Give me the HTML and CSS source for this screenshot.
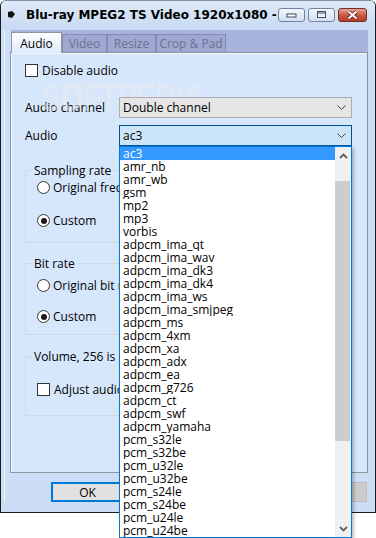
FILE: index.html
```html
<!DOCTYPE html>
<html lang="en">
<head>
    <meta charset="UTF-8">
    <title>Blu-ray MPEG2 TS Video 1920x1080</title>
    <link rel="stylesheet" href="styles.css">
</head>
<body>
    <div class="window">
        <div class="titlebar">
            <svg class="app-icon" width="7" height="7" viewBox="0 0 7 7"><polygon points="0,1 4,0 7,3 4,7 0,6" fill="#111"/></svg>
            <div class="title">Blu-ray MPEG2 TS Video 1920x1080 - (H.264, AC3)</div>
            <div class="caption-buttons">
                <span class="cap-btn">
                    <svg width="11" height="6" viewBox="0 0 11 6"><rect x="1" y="2" width="9" height="3" fill="#fff" stroke="#3b4a63"/></svg>
                </span>
                <span class="cap-btn">
                    <svg width="11" height="9" viewBox="0 0 11 9"><rect x="1.5" y="1.5" width="8" height="6" fill="none" stroke="#3b4a63"/><rect x="2.5" y="2.5" width="6" height="4" fill="none" stroke="#fff"/><line x1="2" y1="3" x2="9" y2="3" stroke="#3b4a63" stroke-width="1"/></svg>
                </span>
                <span class="cap-btn close">
                    <svg width="13" height="10" viewBox="0 0 13 10"><path d="M2.5 1.5 L10.5 8.5 M10.5 1.5 L2.5 8.5" stroke="#5a1e16" stroke-width="3.6"/><path d="M2.5 1.5 L10.5 8.5 M10.5 1.5 L2.5 8.5" stroke="#fff" stroke-width="2"/></svg>
                </span>
            </div>
        </div>

        <div class="client">
            <div class="tabs">
                <div class="tab active tab-audio">Audio</div>
                <div class="tab tab-video">Video</div>
                <div class="tab tab-resize">Resize</div>
                <div class="tab tab-crop">Crop &amp; Pad</div>
            </div>

            <div class="panel">
                <div class="watermark">SOFTPEDIA<span class="reg">®</span></div>

                <div class="check-row">
                    <span class="checkbox"></span>Disable audio
                </div>

                <div class="field-row">
                    <span class="field-label">Audio channel</span>
                    <div class="select">
                        Double channel
                        <svg class="chevron" width="9" height="5" viewBox="0 0 9 5"><path d="M0.5 0.5 L4.5 4.5 L8.5 0.5" fill="none" stroke="#444" stroke-width="1"/></svg>
                    </div>
                </div>

                <div class="field-row field-row-audio">
                    <span class="field-label">Audio</span>
                    <div class="select open">
                        ac3
                        <svg class="chevron" width="9" height="5" viewBox="0 0 9 5"><path d="M0.5 0.5 L4.5 4.5 L8.5 0.5" fill="none" stroke="#444" stroke-width="1"/></svg>

                        <div class="dropdown">
                            <div class="options">
                                <div class="option selected">ac3</div>
                                <div class="option">amr_nb</div>
                                <div class="option">amr_wb</div>
                                <div class="option">gsm</div>
                                <div class="option">mp2</div>
                                <div class="option">mp3</div>
                                <div class="option">vorbis</div>
                                <div class="option">adpcm_ima_qt</div>
                                <div class="option">adpcm_ima_wav</div>
                                <div class="option">adpcm_ima_dk3</div>
                                <div class="option">adpcm_ima_dk4</div>
                                <div class="option">adpcm_ima_ws</div>
                                <div class="option">adpcm_ima_smjpeg</div>
                                <div class="option">adpcm_ms</div>
                                <div class="option">adpcm_4xm</div>
                                <div class="option">adpcm_xa</div>
                                <div class="option">adpcm_adx</div>
                                <div class="option">adpcm_ea</div>
                                <div class="option">adpcm_g726</div>
                                <div class="option">adpcm_ct</div>
                                <div class="option">adpcm_swf</div>
                                <div class="option">adpcm_yamaha</div>
                                <div class="option">pcm_s32le</div>
                                <div class="option">pcm_s32be</div>
                                <div class="option">pcm_u32le</div>
                                <div class="option">pcm_u32be</div>
                                <div class="option">pcm_s24le</div>
                                <div class="option">pcm_s24be</div>
                                <div class="option">pcm_u24le</div>
                                <div class="option">pcm_u24be</div>
                            </div>
                            <div class="scrollbar">
                                <div class="sb-btn">
                                    <svg width="9" height="6" viewBox="0 0 9 6"><path d="M1 5 L4.5 1.5 L8 5" fill="none" stroke="#606060" stroke-width="1.8"/></svg>
                                </div>
                                <div class="sb-thumb"></div>
                                <div class="sb-track"></div>
                                <div class="sb-btn">
                                    <svg width="9" height="6" viewBox="0 0 9 6"><path d="M1 1 L4.5 4.5 L8 1" fill="none" stroke="#606060" stroke-width="1.8"/></svg>
                                </div>
                            </div>
                        </div>
                    </div>
                </div>

                <fieldset class="group group-sampling">
                    <legend>Sampling rate</legend>
                    <div class="radio-row"><span class="radio"></span>Original frequency</div>
                    <div class="radio-row"><span class="radio checked"></span>Custom</div>
                </fieldset>

                <fieldset class="group group-bitrate">
                    <legend>Bit rate</legend>
                    <div class="radio-row"><span class="radio"></span>Original bit rate</div>
                    <div class="radio-row"><span class="radio checked"></span>Custom</div>
                </fieldset>

                <fieldset class="group group-volume">
                    <legend>Volume, 256 is normal</legend>
                    <div class="check-row"><span class="checkbox"></span>Adjust audio volume</div>
                </fieldset>
            </div>

            <div class="buttons">
                <span class="btn default">OK</span>
                <span class="btn cancel">Cancel</span>
            </div>
        </div>
    </div>
</body>
</html>
```

FILE: styles.css
```css
html,
body {
    min-height: 538px;
}
body {
    margin: 0;
    background-color: #fff;
    font-family: "Open Sans", "DejaVu Sans", sans-serif;
    font-size: 12px;
    color: #000;
}

.window {
    position: relative;
    width: 376px;
    height: 513px;
    box-sizing: border-box;
    border: 1px solid #1c1c1c;
    border-top-color: #7d8ea6;
    border-radius: 6px 6px 0 0;
    background-color: #cbdef6;
}

/* title bar */
.titlebar {
    height: 29px;
    box-sizing: border-box;
    display: flex;
    align-items: center;
    padding: 0 8px 2px 7px;
    border-radius: 5px 5px 0 0;
    background: linear-gradient(#dfeaf8, #c7daf2);
}
.app-icon {
    flex: none;
}
.title {
    flex: 1;
    min-width: 0;
    margin-left: 11px;
    overflow: hidden;
    white-space: nowrap;
    font-family: "DejaVu Sans", sans-serif;
    font-weight: bold;
    font-size: 12px;
}
.caption-buttons {
    display: flex;
    gap: 3px;
    margin-left: 1px;
}
.cap-btn {
    width: 27px;
    height: 14px;
    box-sizing: border-box;
    display: flex;
    align-items: center;
    justify-content: center;
    border: 1px solid #7385a2;
    border-radius: 3px;
    background: linear-gradient(#f4f7fc, #d2deee);
}
.cap-btn.close {
    width: 29px;
    border-color: #70301f;
    background: linear-gradient(#e7a697, #c95a45 50%, #b53d28);
}

/* client area */
.client {
    padding: 0 7px 0 9px;
    box-shadow: inset 1px 0 0 #eef4fc;
    margin-left: 3px;
    padding-left: 6px;
}
.tabs {
    display: flex;
    align-items: flex-end;
    height: 22px;
    margin-left: 1px;
    background-color: #a8b3dd;
}
.tab {
    height: 18px;
    box-sizing: border-box;
    display: flex;
    align-items: center;
    justify-content: center;
    overflow: hidden;
    white-space: nowrap;
    border: 1px solid #838cb2;
    border-bottom: none;
    background-color: #9ea8d0;
    color: #6b7294;
}
.tab.active {
    position: relative;
    z-index: 1;
    height: 21px;
    margin-bottom: -1px;
    border-color: #8d95a6;
    background: linear-gradient(#fdfeff, #e0ebfb);
    color: #000;
}
.tab-audio { width: 51px; }
.tab-video { width: 45px; }
.tab-resize { width: 49px; }
.tab-crop { width: 70px; }

.panel {
    position: relative;
    height: 421px;
    box-sizing: border-box;
    padding: 11px 0 0 14px;
    border: 1px solid #8e959f;
    background-color: #d7e7fb;
    box-shadow: inset 1px 1px 0 #f3f8ff;
}
.watermark {
    position: absolute;
    left: 30px;
    top: 24px;
    transform: scaleX(0.78);
    transform-origin: left top;
    font-family: "Liberation Sans", sans-serif;
    font-weight: bold;
    font-size: 38px;
    letter-spacing: -1px;
    color: rgba(255, 255, 255, 0.4);
    text-shadow: 0 0 1px rgba(160, 175, 195, 0.2);
}
.watermark .reg {
    font-size: 12px;
    vertical-align: top;
}

.check-row,
.radio-row {
    position: relative;
    display: flex;
    align-items: center;
    height: 13px;
    line-height: 13px;
    white-space: nowrap;
}
.check-row {
    gap: 4px;
}
.radio-row {
    gap: 3px;
}
.checkbox {
    width: 13px;
    height: 13px;
    box-sizing: border-box;
    border: 1px solid #333;
    background-color: #fff;
}
.radio {
    width: 13px;
    height: 13px;
    box-sizing: border-box;
    display: flex;
    align-items: center;
    justify-content: center;
    border: 1px solid #333;
    border-radius: 50%;
    background-color: #fff;
}
.radio.checked::after {
    content: "";
    width: 6px;
    height: 6px;
    border-radius: 50%;
    background-color: #1a1a1a;
}

.field-row {
    display: flex;
    align-items: center;
    margin-top: 20px;
}
.field-row-audio {
    position: relative;
    z-index: 5;
    margin-top: 7px;
}
.field-label {
    width: 94px;
}
.select {
    position: relative;
    width: 233px;
    height: 21px;
    box-sizing: border-box;
    display: flex;
    align-items: center;
    padding-left: 3px;
    border: 1px solid #adadad;
    background-color: #e5e5e5;
}
.select.open {
    border-color: #005499;
    background-color: #cce4f7;
}
.chevron {
    margin-left: auto;
    margin-right: 5px;
}

/* open list of the audio select */
.dropdown {
    position: absolute;
    left: -1px;
    top: 20px;
    width: 233px;
    height: 392px;
    box-sizing: border-box;
    display: flex;
    border: 1px solid #0078d7;
    background-color: #fff;
    box-shadow: 2px 2px 3px rgba(0, 0, 0, 0.25);
}
.options {
    flex: 1;
    min-width: 0;
}
.option {
    height: 13px;
    line-height: 13px;
    padding-left: 3px;
    white-space: nowrap;
    overflow: hidden;
}
.option.selected {
    background-color: #3399ff;
    color: #fff;
}
.scrollbar {
    width: 16px;
    display: flex;
    flex-direction: column;
    background-color: #f0f0f0;
}
.sb-btn {
    height: 17px;
    display: flex;
    align-items: center;
    justify-content: center;
}
.sb-thumb {
    height: 260px;
    margin: 17px 1px 0 0;
    background-color: #cdcdcd;
}
.sb-track {
    flex: 1;
}

/* group boxes */
.group {
    width: 325px;
    box-sizing: border-box;
    margin: 0;
    min-inline-size: 0;
    border: 1px solid #d0d9e3;
}
.group legend {
    padding: 0 2px;
    margin-left: -5px;
    line-height: 13px;
}
.group-sampling {
    margin-top: 18px;
    padding: 4px 0 15px 11px;
}
.group-sampling .radio-row + .radio-row {
    margin-top: 20px;
}
.group-bitrate {
    margin-top: 14px;
    padding: 9px 0 11px 11px;
}
.group-bitrate .radio-row + .radio-row {
    margin-top: 18px;
}
.group-volume {
    margin-top: 15px;
    padding: 20px 0 19px 11px;
}

/* dialog buttons */
.buttons {
    display: flex;
    margin-top: 9px;
    padding: 0 1px 0 41px;
}
.btn {
    width: 73px;
    height: 20px;
    box-sizing: border-box;
    display: flex;
    align-items: center;
    justify-content: center;
    border: 1px solid #adadad;
    background-color: #e1e1e1;
}
.btn.default {
    border: 2px solid #0078d7;
}
.btn.cancel {
    margin-left: auto;
    border-color: #bdbdbd;
    background-color: #cccccc;
    color: #8a8a8a;
}
```
